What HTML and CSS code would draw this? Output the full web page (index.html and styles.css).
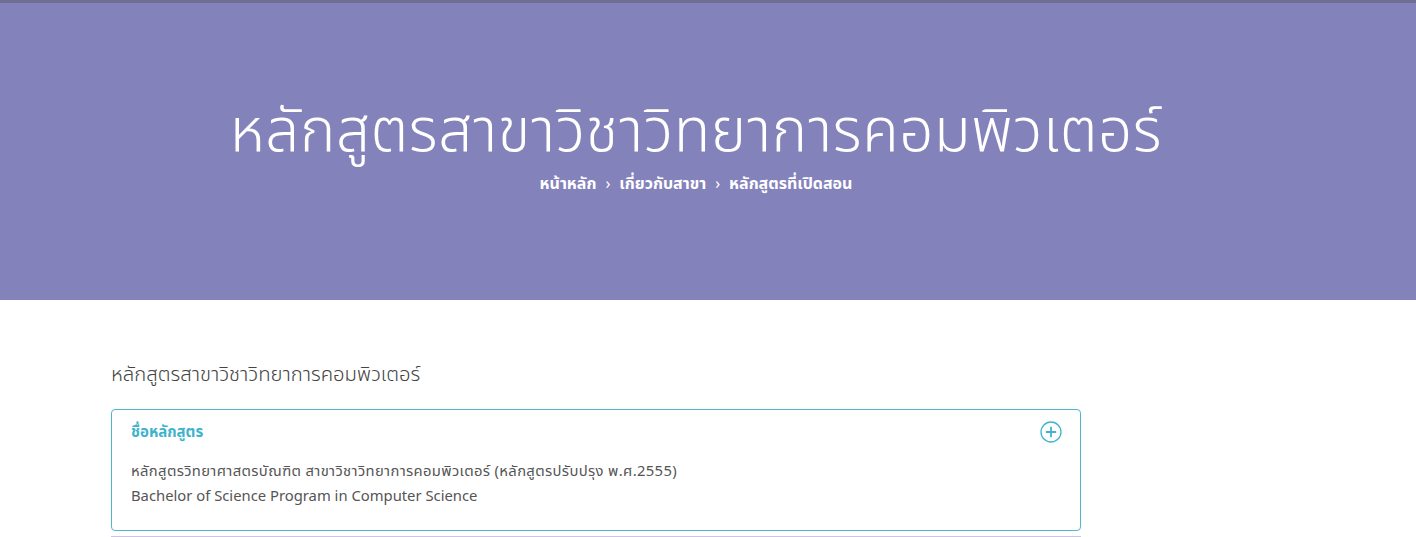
FILE: index.html
```html
<!DOCTYPE html>
<html lang="th">
<head>
<meta charset="utf-8">
<title>หลักสูตรสาขาวิชาวิทยาการคอมพิวเตอร์</title>
<link rel="stylesheet" href="styles.css">
</head>
<body>
<header class="hero">
  <h1 class="hero-title">หลักสูตรสาขาวิชาวิทยาการคอมพิวเตอร์</h1>
  <nav class="crumbs">
    <a href="#">หน้าหลัก</a><span class="sep">›</span><a href="#">เกี่ยวกับสาขา</a><span class="sep">›</span><span>หลักสูตรที่เปิดสอน</span>
  </nav>
</header>
<main class="content">
  <h2 class="section-title">หลักสูตรสาขาวิชาวิทยาการคอมพิวเตอร์</h2>
  <section class="card">
    <div class="card-head">
      <span class="card-title">ชื่อหลักสูตร</span>
      <svg class="toggle" width="22" height="22" viewBox="0 0 22 22"><circle cx="11" cy="11" r="10" fill="none" stroke="#3fb3cc" stroke-width="1.3"/><path d="M11 6.5v9M6.5 11h9" stroke="#3fb3cc" stroke-width="1.8" stroke-linecap="round"/></svg>
    </div>
    <div class="card-body">
      <p class="th-line">หลักสูตรวิทยาศาสตรบัณฑิต สาขาวิชาวิทยาการคอมพิวเตอร์ (หลักสูตรปรับปรุง พ.ศ.2555)</p>
      <p>Bachelor of Science Program in Computer Science</p>
    </div>
  </section>
  <div class="next-card"></div>
</main>
</body>
</html>
```
FILE: styles.css
```css
html, body { margin: 0; padding: 0; }
body {
  font-family: "Noto Sans Thai", "Noto Sans", "Liberation Sans", sans-serif;
  background: #fff;
  color: #555;
}
.hero {
  height: 297px;
  border-top: 3px solid #6f6d93;
  background: #8482bb;
  display: flex;
  flex-direction: column;
  align-items: center;
  padding-right: 24px;
  color: #fff;
}
.hero-title {
  margin: 92px 0 0;
  font-size: 60px;
  font-weight: 300;
  line-height: 76px;
  letter-spacing: 0.6px;
}
.crumbs {
  margin-top: 0;
  font-size: 16px;
  font-weight: 700;
  line-height: 26px;
}
.crumbs a { color: #fff; text-decoration: none; }
.crumbs .sep { margin: 0 9px; font-weight: 400; }
.content {
  width: 970px;
  margin: 0 0 0 111px;
  padding-top: 60px;
}
.section-title {
  margin: 0 0 19px;
  font-size: 20.3px;
  font-weight: 300;
  line-height: 30px;
  color: #444;
}
.card {
  border: 1px solid #4fb8cc;
  border-radius: 4px;
  padding: 10px 19px 21px 19px;
}
.card-head {
  display: flex;
  justify-content: space-between;
  align-items: center;
  height: 24px;
}
.card-title {
  color: #3fb3cc;
  font-weight: 700;
  font-size: 15px;
}
.toggle { display: block; margin-right: -1px; margin-top: -1px; }
.card-body { margin-top: 15px; }
.card-body p {
  margin: 0;
  font-size: 14.8px;
  line-height: 25px;
  color: #555;
}
.card-body .th-line { letter-spacing: 0.35px; }
.next-card {
  margin-top: 5px;
  border-top: 1px solid #c9c7dc;
  height: 20px;
}
```
